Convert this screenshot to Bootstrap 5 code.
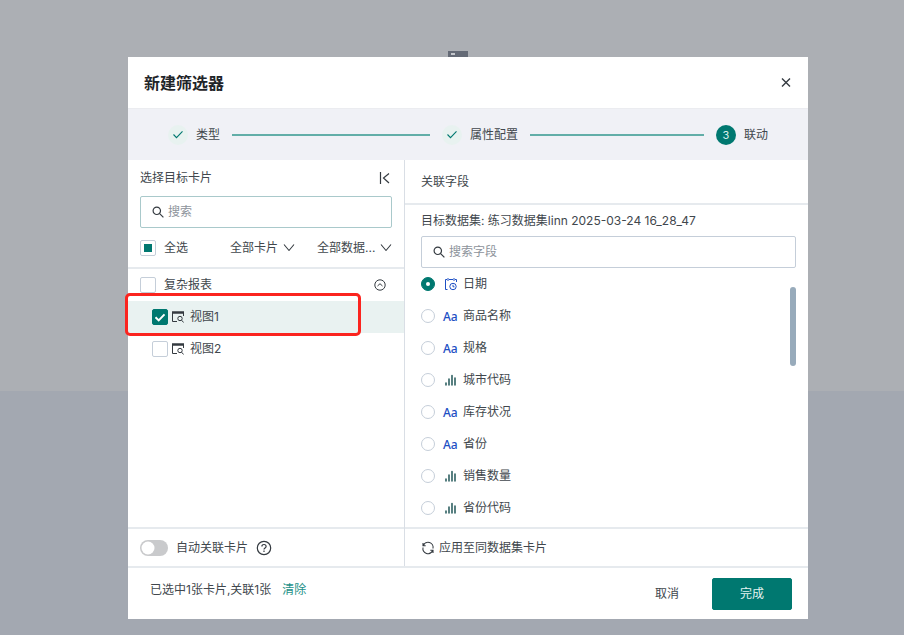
<!DOCTYPE html>
<html lang="zh-CN">
<head>
<meta charset="utf-8">
<meta name="viewport" content="width=device-width, initial-scale=1">
<title>新建筛选器</title>
<link href="https://cdn.jsdelivr.net/npm/bootstrap@5.3.0/dist/css/bootstrap.min.css" rel="stylesheet">
<style>
:root {
  --teal: #007870;
  --ink: #41474d;
  --rule: #e6eaee;
  --edge: #c5ced9;
}
body {
  font-family: Inter, "Noto Sans CJK SC", sans-serif;
  font-size: 12px;
  line-height: 20px;
  color: var(--ink);
  background: linear-gradient(#acafb4 391px, #a3a8b1 391px);
}
svg { flex: none; display: block; }
.page { padding: 0 96px 16px 128px; }
.peek { height: 57px; padding-left: 320px; }
.peek-chip { width: 20px; height: 6px; background: #646a76; padding: 2px 3px; }
.peek-chip span { display: block; width: 4px; height: 2px; background: #c3c6cb; }
.dialog-title { font-size: 16px; line-height: 24px; font-weight: 700; color: #1f2529; }
.dialog-head { height: 51px; }
.icon-btn { background: none; border: 0; padding: 0; color: #343a40; line-height: 1; }
.icon-btn span { color: var(--ink); }
.steps { height: 52px; background: #f0f1f6; padding: 0 40px; gap: 12px; border-top: 1px solid #ebecf0; }
.step-dot { width: 20px; height: 20px; border-radius: 50%; background: #e8f2f0; color: var(--teal); }
.step-dot.current { background: var(--teal); color: #d8efec; font-size: 11px; }
.step-line { height: 2px; background: #62aea8; margin-left: 4px; }
.panels { display: grid; grid-template-columns: 277fr 403fr; }
.panel-left { border-right: 1px solid #d9dee5; }
.rule-b { border-bottom: 2px solid var(--rule); }
.rule-t { border-top: 2px solid var(--rule); }
.left-top { padding: 8px 12px 0; height: 109px; }
.right-top { height: 45px; padding: 12px 16px; }
.search { height: 32px; border: 1px solid var(--edge); border-radius: 2px; padding: 0 11px; gap: 4px; }
.search.focus { border-color: #a9c9cb; }
.search input { border: 0; outline: 0; padding: 0; min-width: 0; background: none; color: var(--ink); }
.search input::placeholder { color: #8d939b; opacity: 1; }
.form-check-input { flex: none; margin: 0; width: 16px; height: 16px; border-color: var(--edge); }
.form-check-input[type=checkbox] { border-radius: 2px; }
.form-check-input:checked { background-color: var(--teal); border-color: var(--teal); }
.form-check-input[type=checkbox]:checked { background-size: 14px 14px; background-image: url("data:image/svg+xml,%3Csvg xmlns='http://www.w3.org/2000/svg' viewBox='0 0 14 14'%3E%3Cpath d='M2.500 7.200l3.200 3.200 5.800-6' fill='none' stroke='white' stroke-width='2'/%3E%3C/svg%3E"); }
.form-check-input[type=checkbox]:indeterminate { background: #fff linear-gradient(var(--teal), var(--teal)) center / 8px 8px no-repeat; border-color: var(--edge); }
.form-check-input[type=radio] { width: 14px; height: 14px; }
.form-check-input[type=radio]:checked { background-size: 14px 14px; background-position: center; background-image: url("data:image/svg+xml,%3Csvg xmlns='http://www.w3.org/2000/svg' viewBox='0 0 14 14'%3E%3Ccircle cx='7' cy='7' r='2' fill='white'/%3E%3C/svg%3E"); }
.form-select {
  width: auto; border: 0; padding: 0 16px 0 0; font-size: 12px; line-height: 20px; color: var(--ink);
  background-color: transparent; background-size: 12px 12px; background-position: right center;
  background-image: url("data:image/svg+xml,%3Csvg xmlns='http://www.w3.org/2000/svg' viewBox='0 0 12 12'%3E%3Cpath d='M1 2.500l5 6 5-6' fill='none' stroke='%23343a40' stroke-width='1.1'/%3E%3C/svg%3E");
}
.filters { gap: 22px; }
.item { height: 32px; }
.tree .item { padding: 0 12px; }
.tree .group-row { padding-right: 18px; }
.tree .leaf { padding: 0 24px; gap: 4px; }
.tree .leaf label { padding-left: 2px; }
.tree .picked { background: #e9f2f1; position: relative; }
.outline-mark { position: absolute; top: -8px; bottom: -3px; left: -3px; right: 43px; border: 3px solid #fb241f; border-radius: 5px; pointer-events: none; }
.right-body { padding: 6px 12px 2px 16px; }
.dataset { margin-bottom: 5px; }
.kind { width: 16px; }
.kind-text { font-family: "Noto Sans", sans-serif; font-weight: 500; color: #1d4fc4; padding-top: 1px; }
.scroll-track { width: 6px; padding-top: 19px; }
.scroll-thumb { height: 79px; border-radius: 3px; background: #98abbb; }
.panel-foot { height: 39px; padding: 0 12px; }
.panel-right .panel-foot { padding: 0 16px; }
.switch-input.form-check-input { width: 28px; height: 16px; border: 0; border-radius: 8px; background: #c9cacc url("data:image/svg+xml,%3Csvg xmlns='http://www.w3.org/2000/svg' viewBox='0 0 28 16'%3E%3Ccircle cx='8' cy='8' r='6.500' fill='white'/%3E%3C/svg%3E") left center / 28px 16px no-repeat; }
.dialog-foot { height: 53px; padding: 0 16px 0 22px; }
.summary { padding-bottom: 8px; }
.clear-link { color: #1a9088; text-decoration: none; margin-left: 11px; }
.btn { font-size: 12px; line-height: 20px; border-radius: 2px; padding: 5px 16px; height: 32px; }
.btn-cancel { color: var(--ink); }
.btn-done { background: var(--teal); border-color: var(--teal); color: #e4f3f1; width: 80px; }
.btn-done:hover { background: #00695f; color: #fff; }
</style>
<script src="https://cdn.jsdelivr.net/npm/bootstrap@5.3.0/dist/js/bootstrap.bundle.min.js"></script>
</head>
<body>
<div class="page d-flex flex-column min-vh-100">
  <div class="peek d-flex align-items-end"><div class="peek-chip"><span></span></div></div>
  <main class="bg-white flex-grow-1 d-flex flex-column" role="dialog" aria-labelledby="dlg-title">
    <header class="dialog-head d-flex align-items-center justify-content-between px-3">
      <h1 class="dialog-title m-0" id="dlg-title">新建筛选器</h1>
      <button class="icon-btn" type="button" aria-label="关闭">
        <svg width="12" height="12" viewBox="0 0 12 12" fill="none" stroke="currentColor" stroke-width="1.400"><path d="M2 1.500l8 8M10 1.500l-8 8"/></svg>
      </button>
    </header>
    <ol class="steps list-unstyled d-flex align-items-center m-0">
      <li class="d-flex align-items-center gap-2 flex-fill w-100">
        <span class="step-dot d-flex align-items-center justify-content-center flex-shrink-0"><svg width="12" height="12" viewBox="0 0 12 12" fill="none" stroke="currentColor" stroke-width="1.100"><path d="M1.500 5.500l3 3.200 6-6.400"/></svg></span>
        <span class="text-nowrap">类型</span><span class="step-line flex-grow-1"></span>
      </li>
      <li class="d-flex align-items-center gap-2 flex-fill w-100">
        <span class="step-dot d-flex align-items-center justify-content-center flex-shrink-0"><svg width="12" height="12" viewBox="0 0 12 12" fill="none" stroke="currentColor" stroke-width="1.100"><path d="M1.500 5.500l3 3.200 6-6.400"/></svg></span>
        <span class="text-nowrap">属性配置</span><span class="step-line flex-grow-1"></span>
      </li>
      <li class="d-flex align-items-center gap-2 flex-shrink-0">
        <span class="step-dot current d-flex align-items-center justify-content-center">3</span>
        <span class="text-nowrap">联动</span>
      </li>
    </ol>

    <div class="panels flex-grow-1">
      <section class="panel-left d-flex flex-column">
        <div class="left-top rule-b">
          <div class="d-flex align-items-center justify-content-between">
            <span>选择目标卡片</span>
            <button class="icon-btn" type="button" aria-label="收起">
              <svg width="14" height="14" viewBox="0 0 14 14" fill="none" stroke="currentColor" stroke-width="1.200"><path d="M2.500 1v12M11 2.500L5.500 7l5.500 5"/></svg>
            </button>
          </div>
          <div class="search focus d-flex align-items-center mt-2">
            <svg width="12" height="12" viewBox="0 0 12 12" fill="none" stroke="#343a40" stroke-width="1.200"><circle cx="4.800" cy="4.800" r="3.700"/><path d="M7.400 7.400l4 4"/></svg>
            <input class="flex-grow-1" type="text" placeholder="搜索" aria-label="搜索">
          </div>
          <div class="d-flex align-items-center justify-content-between mt-1 item">
            <div class="d-flex align-items-center gap-2">
              <input class="form-check-input" type="checkbox" id="all"><label for="all">全选</label>
            </div>
            <div class="filters d-flex">
              <select class="form-select" aria-label="卡片范围"><option>全部卡片</option></select>
              <select class="form-select" aria-label="数据集范围"><option>全部数据...</option></select>
            </div>
          </div>
        </div>
        <ul class="tree list-unstyled m-0 flex-grow-1">
          <li class="item group-row d-flex align-items-center gap-2">
            <input class="form-check-input" type="checkbox" id="report"><label for="report" class="flex-grow-1">复杂报表</label>
            <button class="icon-btn" type="button" aria-label="折叠">
              <svg width="12" height="12" viewBox="0 0 12 12" fill="none" stroke="currentColor"><circle cx="6" cy="6" r="5.200"/><path d="M3.500 7L6 4.700 8.500 7"/></svg>
            </button>
          </li>
          <li class="item leaf picked d-flex align-items-center">
            <input class="form-check-input" type="checkbox" id="v1" checked>
            <svg width="12" height="12" viewBox="0 0 12 12" fill="none" stroke="#343a40"><path d="M0 1.500h12" stroke-width="2.500"/><path d="M.5 2v8.500H5M11.500 2v3"/><circle cx="8" cy="7.500" r="2.200"/><path d="M9.600 9.200l2 2.300"/></svg>
            <label for="v1">视图1</label>
            <span class="outline-mark"></span>
          </li>
          <li class="item leaf d-flex align-items-center">
            <input class="form-check-input" type="checkbox" id="v2">
            <svg width="12" height="12" viewBox="0 0 12 12" fill="none" stroke="#343a40"><path d="M0 1.500h12" stroke-width="2.500"/><path d="M.5 2v8.500H5M11.500 2v3"/><circle cx="8" cy="7.500" r="2.200"/><path d="M9.600 9.200l2 2.300"/></svg>
            <label for="v2">视图2</label>
          </li>
        </ul>
        <div class="panel-foot rule-t d-flex align-items-center gap-2">
          <input class="form-check-input switch-input" type="checkbox" role="switch" id="auto"><label for="auto">自动关联卡片</label>
          <button class="icon-btn" type="button" aria-label="帮助">
            <svg width="16" height="16" viewBox="0 0 16 16" fill="none" stroke="currentColor" stroke-width="1.200"><circle cx="8" cy="8" r="6.700"/><path d="M5.900 6.500c0-1.300.9-2 2.100-2s2.100.8 2.100 1.900c0 1.500-2.100 1.500-2.100 3.100M8 10.600v1.300"/></svg>
          </button>
        </div>
      </section>

      <section class="panel-right d-flex flex-column">
        <div class="right-top rule-b">关联字段</div>
        <div class="right-body flex-grow-1">
          <div class="dataset">目标数据集: 练习数据集linn 2025-03-24 16_28_47</div>
          <div class="search d-flex align-items-center">
            <svg width="12" height="12" viewBox="0 0 12 12" fill="none" stroke="#343a40" stroke-width="1.200"><circle cx="4.800" cy="4.800" r="3.700"/><path d="M7.400 7.400l4 4"/></svg>
            <input class="flex-grow-1" type="text" placeholder="搜索字段" aria-label="搜索字段">
          </div>
          <div class="d-flex">
            <ul class="fields list-unstyled m-0 flex-grow-1">
              <li class="item d-flex align-items-center gap-2"><input class="form-check-input" type="radio" name="field" id="f1" checked>
                <label for="f1" class="d-flex align-items-center gap-1"><span class="kind d-flex justify-content-center"><svg width="12" height="14" viewBox="0 0 12 14" fill="none" stroke="#1d4fc4"><path d="M2.500 12.500h-2v-10H2M4 2.500h4M10 2.500h1.500V5M3 1v3M9 1v3"/><circle cx="8" cy="9.500" r="3.200"/><path d="M8 7.800v2h1.500"/></svg></span>日期</label></li>
              <li class="item d-flex align-items-center gap-2"><input class="form-check-input" type="radio" name="field" id="f2">
                <label for="f2" class="d-flex align-items-center gap-1"><span class="kind kind-text">Aa</span>商品名称</label></li>
              <li class="item d-flex align-items-center gap-2"><input class="form-check-input" type="radio" name="field" id="f3">
                <label for="f3" class="d-flex align-items-center gap-1"><span class="kind kind-text">Aa</span>规格</label></li>
              <li class="item d-flex align-items-center gap-2"><input class="form-check-input" type="radio" name="field" id="f4">
                <label for="f4" class="d-flex align-items-center gap-1"><span class="kind d-flex justify-content-center"><svg width="12" height="12" viewBox="0 0 12 12" stroke="#124a4c" stroke-width="1.400" stroke-linecap="round"><path d="M1 9v2M4 5v6M7 1.500V11M10 4v7"/></svg></span>城市代码</label></li>
              <li class="item d-flex align-items-center gap-2"><input class="form-check-input" type="radio" name="field" id="f5">
                <label for="f5" class="d-flex align-items-center gap-1"><span class="kind kind-text">Aa</span>库存状况</label></li>
              <li class="item d-flex align-items-center gap-2"><input class="form-check-input" type="radio" name="field" id="f6">
                <label for="f6" class="d-flex align-items-center gap-1"><span class="kind kind-text">Aa</span>省份</label></li>
              <li class="item d-flex align-items-center gap-2"><input class="form-check-input" type="radio" name="field" id="f7">
                <label for="f7" class="d-flex align-items-center gap-1"><span class="kind d-flex justify-content-center"><svg width="12" height="12" viewBox="0 0 12 12" stroke="#124a4c" stroke-width="1.400" stroke-linecap="round"><path d="M1 9v2M4 5v6M7 1.500V11M10 4v7"/></svg></span>销售数量</label></li>
              <li class="item d-flex align-items-center gap-2"><input class="form-check-input" type="radio" name="field" id="f8">
                <label for="f8" class="d-flex align-items-center gap-1"><span class="kind d-flex justify-content-center"><svg width="12" height="12" viewBox="0 0 12 12" stroke="#124a4c" stroke-width="1.400" stroke-linecap="round"><path d="M1 9v2M4 5v6M7 1.500V11M10 4v7"/></svg></span>省份代码</label></li>
            </ul>
            <div class="scroll-track"><div class="scroll-thumb"></div></div>
          </div>
        </div>
        <div class="panel-foot rule-t d-flex align-items-center">
          <button class="icon-btn d-flex align-items-center gap-1" type="button">
            <svg width="14" height="14" viewBox="0 0 14 14" fill="none" stroke="currentColor" stroke-width="1.100"><path d="M2.300 4.500A5.100 5.100 0 0 1 12 7.500M11.700 9.500A5.100 5.100 0 0 1 2 6.500M2 2v2.700h2.700M12 12V9.300H9.300"/></svg>
            <span>应用至同数据集卡片</span>
          </button>
        </div>
      </section>
    </div>

    <footer class="dialog-foot rule-t d-flex align-items-center">
      <div class="summary flex-grow-1">已选中1张卡片,关联1张<a class="clear-link" href="#">清除</a></div>
      <button class="btn btn-cancel me-3" type="button">取消</button>
      <button class="btn btn-done" type="button">完成</button>
    </footer>
  </main>
</div>
<script>
document.getElementById('all').indeterminate = true;
</script>
</body>
</html>
